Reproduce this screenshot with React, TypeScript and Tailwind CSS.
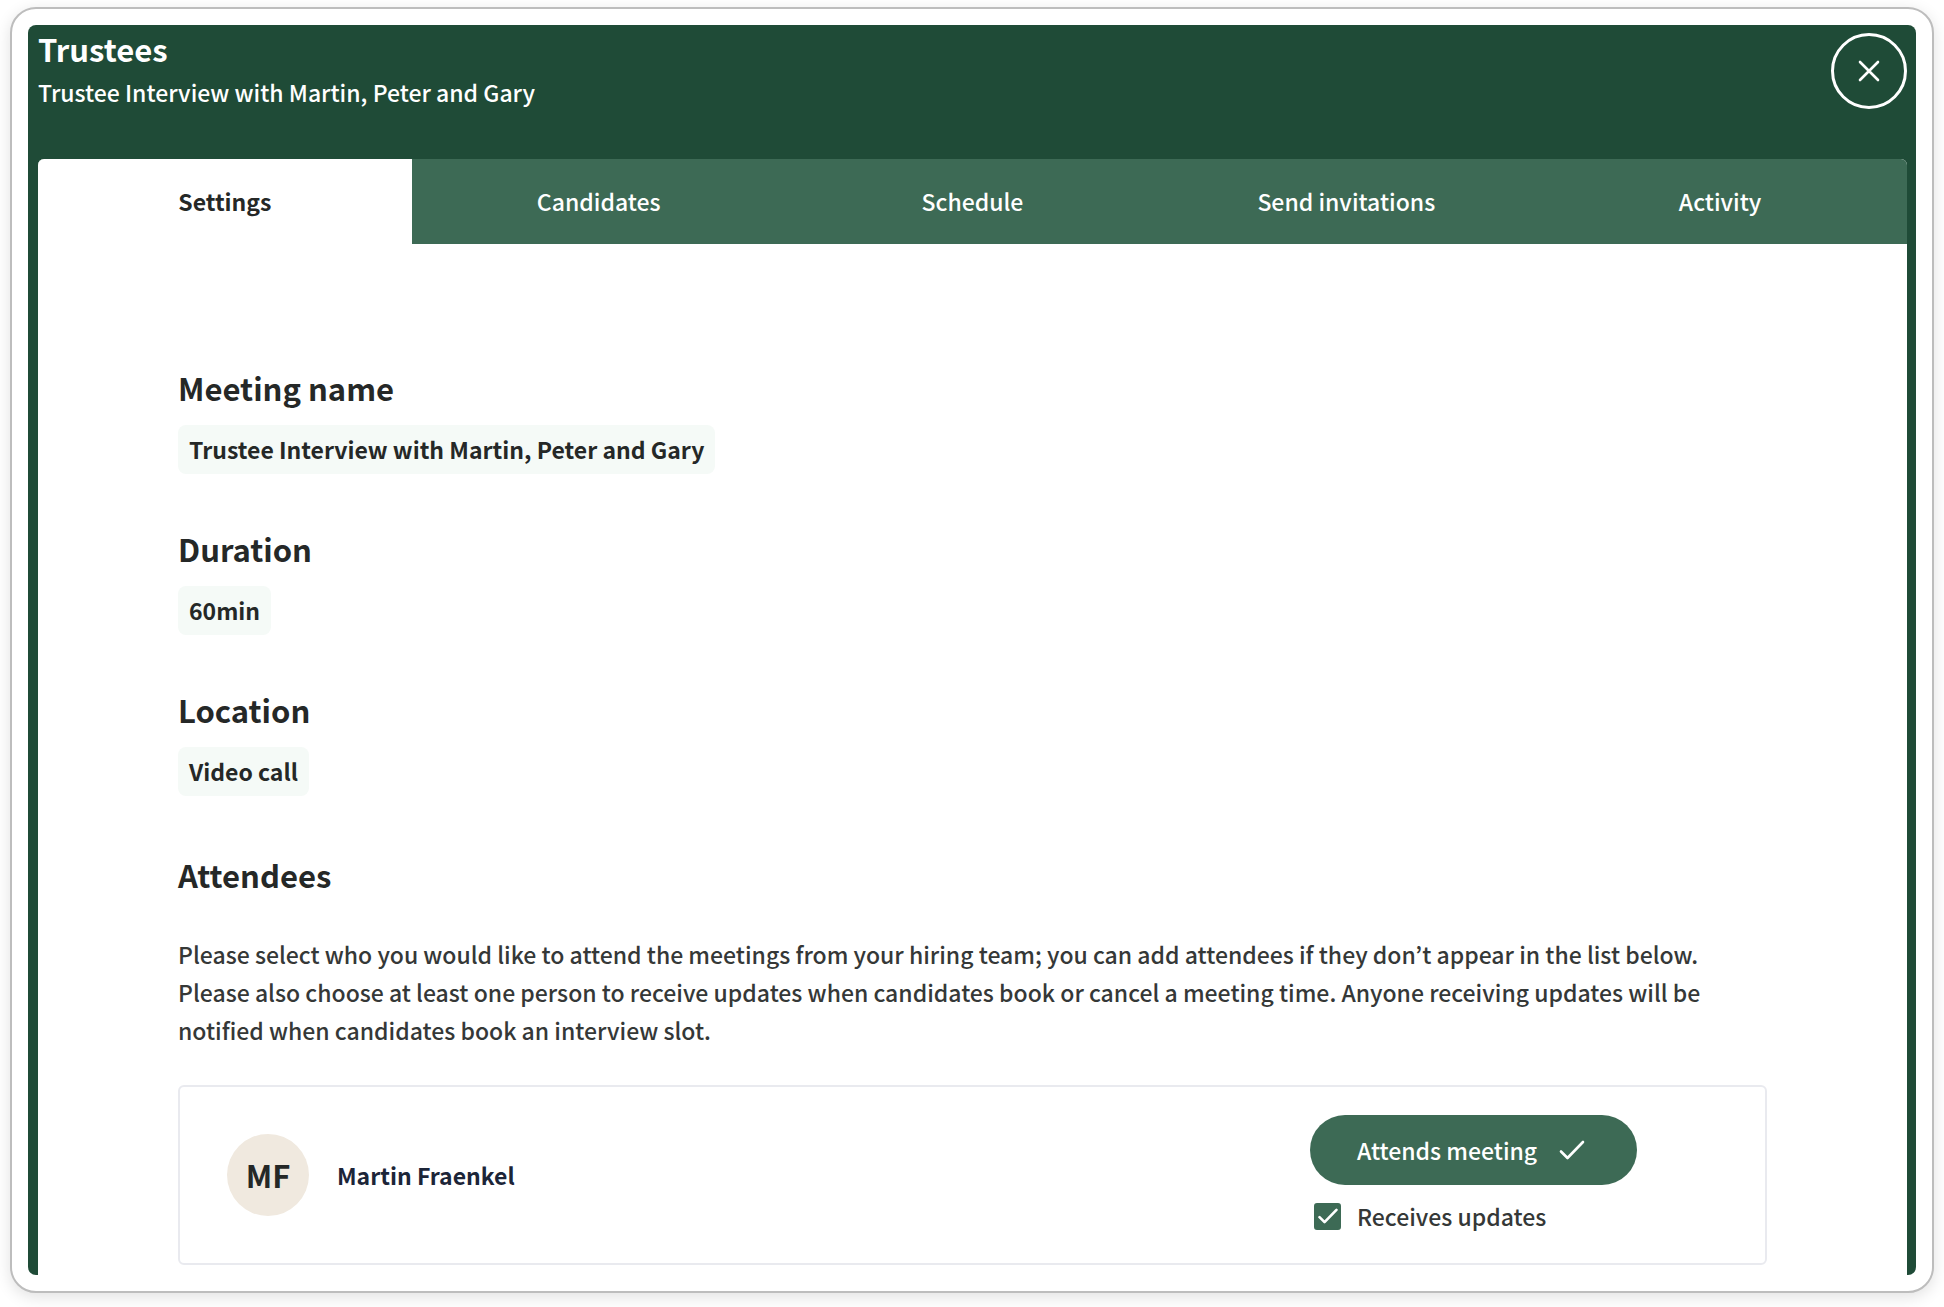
import { useState } from 'react'

const TABS = ['Settings', 'Candidates', 'Schedule', 'Send invitations', 'Activity']

const DETAILS = [
  { label: 'Meeting name', value: 'Trustee Interview with Martin, Peter and Gary' },
  { label: 'Duration', value: '60min' },
  { label: 'Location', value: 'Video call' },
]

interface Attendee {
  id: string
  name: string
  initials: string
}

const ATTENDEES: Attendee[] = [{ id: 'martin', name: 'Martin Fraenkel', initials: 'MF' }]

interface TickProps {
  className: string
  strokeWidth: number
}

function Tick({ className, strokeWidth }: TickProps) {
  return (
    <svg
      className={className}
      viewBox="0 0 26 20"
      fill="none"
      stroke="currentColor"
      strokeWidth={strokeWidth}
      strokeLinecap="round"
      strokeLinejoin="round"
      aria-hidden="true"
    >
      <path d="M2 11.5L8.5 18L24 2" />
    </svg>
  )
}

interface DetailProps {
  label: string
  value: string
}

function Detail({ label, value }: DetailProps) {
  return (
    <section className="flex flex-col items-start gap-[17px]">
      <h2 className="text-[31px] leading-10 font-bold">{label}</h2>
      <p className="rounded-lg bg-[#f5faf7] px-[11px] text-[23px] leading-[49px] font-bold">
        {value}
      </p>
    </section>
  )
}

function AttendeeCard({ attendee }: { attendee: Attendee }) {
  const [attends, setAttends] = useState(true)
  const [updates, setUpdates] = useState(true)

  return (
    <li className="flex items-center rounded-md border-2 border-[#e9eaef] py-7 pr-32 pl-[47px]">
      <div className="flex size-[82px] items-center justify-center rounded-full bg-[#f0e9df] text-[31px] leading-10 font-bold">
        {attendee.initials}
      </div>
      <p className="ml-7 flex-1 text-[23px] font-bold text-[#1c2538]">{attendee.name}</p>
      <div className="flex w-[327px] flex-col gap-3">
        <button
          type="button"
          aria-pressed={attends}
          onClick={() => setAttends(!attends)}
          className="flex h-[70px] items-center rounded-full bg-[#3d6a55] pl-[47px] text-[23px] font-medium text-white"
        >
          Attends meeting
          {attends && <Tick className="ml-[22px] h-5 w-[26px]" strokeWidth={2.6} />}
        </button>
        <label className="flex h-[38px] items-center gap-4 pl-1 text-[23px] font-medium text-[#353837]">
          <span className="grid place-items-center text-white">
            <input
              type="checkbox"
              checked={updates}
              onChange={() => setUpdates(!updates)}
              className="col-start-1 row-start-1 size-[27px] appearance-none rounded-[3px] border-2 border-[#3d6a55] bg-white checked:bg-[#3d6a55]"
            />
            {updates && (
              <Tick
                className="pointer-events-none col-start-1 row-start-1 h-4 w-5"
                strokeWidth={3.4}
              />
            )}
          </span>
          Receives updates
        </label>
      </div>
    </li>
  )
}

export default function App() {
  const [activeTab, setActiveTab] = useState('Settings')

  return (
    <div className="bg-white px-2.5 pt-[7px] pb-3.5 font-['Noto_Sans_CJK_KR','Noto_Sans',sans-serif] text-[#252827]">
      <div className="rounded-[26px] border-2 border-[#bdbdbd] bg-white p-4 shadow-[0_4px_16px_rgba(0,0,0,0.12)]">
        <div className="overflow-hidden rounded-lg bg-[#1f4b37] pr-[9px] pl-2.5">
          <header className="flex items-center justify-between pt-1 pb-[47px] text-white">
            <div className="flex flex-col gap-[3px]">
              <h1 className="text-[31px] leading-10 font-bold">Trustees</h1>
              <p className="text-[23px] leading-10 font-medium">
                Trustee Interview with Martin, Peter and Gary
              </p>
            </div>
            <button
              type="button"
              aria-label="Close"
              className="flex size-[76px] items-center justify-center rounded-full border-3 border-white"
            >
              <svg
                className="size-[22px]"
                viewBox="0 0 22 22"
                fill="none"
                stroke="currentColor"
                strokeWidth="2.6"
                strokeLinecap="round"
                aria-hidden="true"
              >
                <path d="M2 2L20 20M20 2L2 20" />
              </svg>
            </button>
          </header>

          <div className="overflow-hidden rounded-t-md bg-white">
            <nav role="tablist" className="grid grid-cols-5 bg-[#3d6a55]">
              {TABS.map((tab) => (
                <button
                  key={tab}
                  type="button"
                  role="tab"
                  aria-selected={tab === activeTab}
                  onClick={() => setActiveTab(tab)}
                  className={
                    tab === activeTab
                      ? 'h-[85px] bg-white text-[23px] font-bold'
                      : 'h-[85px] text-[23px] font-medium text-white'
                  }
                >
                  {tab}
                </button>
              ))}
            </nav>

            <main className="px-[140px] pt-[124px] pb-2.5">
              <div className="flex flex-col gap-[55px]">
                {DETAILS.map((detail) => (
                  <Detail key={detail.label} label={detail.label} value={detail.value} />
                ))}
              </div>

              <section className="mt-[59px]">
                <h2 className="text-[31px] leading-10 font-bold">Attendees</h2>
                <p className="mt-10 text-[23px] leading-[38px] font-medium text-[#353837]">
                  Please select who you would like to attend the meetings from your hiring team; you
                  can add attendees if they don’t appear in the list below. Please also choose at
                  least one person to receive updates when candidates book or cancel a meeting time.
                  Anyone receiving updates will be notified when candidates book an interview slot.
                </p>
                <ul className="mt-9">
                  {ATTENDEES.map((attendee) => (
                    <AttendeeCard key={attendee.id} attendee={attendee} />
                  ))}
                </ul>
              </section>
            </main>
          </div>
        </div>
      </div>
    </div>
  )
}
